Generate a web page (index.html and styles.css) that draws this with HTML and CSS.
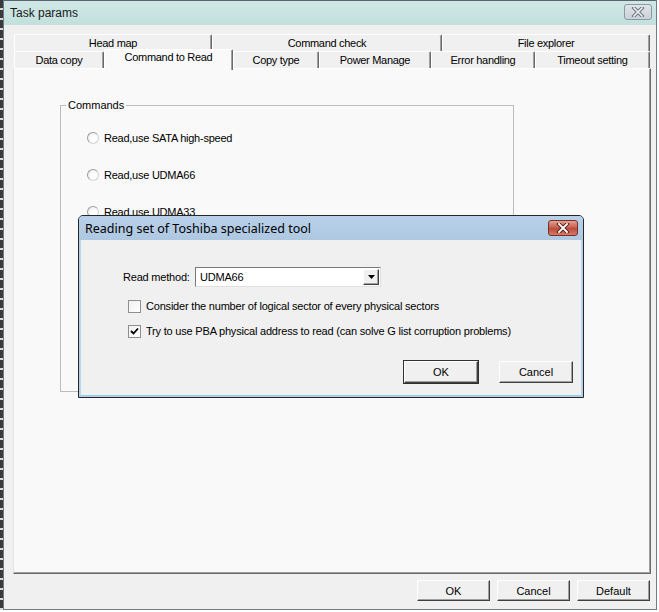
FILE: index.html
```html
<!DOCTYPE html>
<html lang="en">
<head>
    <meta charset="UTF-8">
    <title>Task params</title>
    <link rel="stylesheet" href="styles.css">
</head>
<body>
    <div class="screen">
        <div class="edge"></div>
        <div class="window">
            <div class="titlebar">
                <span class="title">Task params</span>
                <button class="close-btn">
                    <svg width="14" height="10" viewBox="0 0 14 10">
                        <path d="M3 1 L11 9 M11 1 L3 9" stroke="#6b7580" stroke-width="3.6" stroke-linecap="square"/>
                        <path d="M3 1 L11 9 M11 1 L3 9" stroke="#eef1f3" stroke-width="1.6" stroke-linecap="square"/>
                    </svg>
                </button>
            </div>

            <div class="content">
                <!-- back row of tabs -->
                <div class="tab-row">
                    <div class="tab" style="width: 198px;">Head map</div>
                    <div class="tab" style="width: 230px;">Command check</div>
                    <div class="tab" style="width: 208px;">File explorer</div>
                </div>
                <!-- front row of tabs -->
                <div class="tab-row">
                    <div class="tab" style="width: 90px;">Data copy</div>
                    <div class="tab active" style="width: 129px;">Command to Read</div>
                    <div class="tab" style="width: 86px;">Copy type</div>
                    <div class="tab" style="width: 112px;">Power Manage</div>
                    <div class="tab" style="width: 104px;">Error handling</div>
                    <div class="tab" style="width: 115px;">Timeout setting</div>
                </div>

                <div class="panel">
                    <fieldset class="group">
                        <legend>Commands</legend>
                        <label class="radio-row"><span class="radio"></span>Read,use SATA high-speed</label>
                        <label class="radio-row"><span class="radio"></span>Read,use UDMA66</label>
                        <label class="radio-row"><span class="radio"></span>Read,use UDMA33</label>
                    </fieldset>
                </div>

                <div class="footer">
                    <button class="btn">OK</button>
                    <button class="btn">Cancel</button>
                    <button class="btn">Default</button>
                </div>
            </div>
        </div>
    </div>

    <!-- modal dialog over the tab page -->
    <div class="dialog">
        <div class="dialog-title">
            <span>Reading set of Toshiba specialized tool</span>
            <button class="dialog-close">
                <svg width="14" height="10" viewBox="0 0 14 10">
                    <path d="M3 1 L11 9 M11 1 L3 9" stroke="#5a2018" stroke-width="3.8" stroke-linecap="square"/>
                    <path d="M3 1 L11 9 M11 1 L3 9" stroke="#ffffff" stroke-width="1.8" stroke-linecap="square"/>
                </svg>
            </button>
        </div>
        <div class="dialog-body">
            <div class="method-row">
                <span class="method-label">Read method:</span>
                <div class="combo">
                    <span class="combo-value">UDMA66</span>
                    <span class="combo-arrow">
                        <svg width="7" height="4" viewBox="0 0 7 4"><path d="M0 0 H7 L3.5 4 Z" fill="#000"/></svg>
                    </span>
                </div>
            </div>
            <label class="check-row"><span class="checkbox"></span>Consider the number of logical sector of every physical sectors</label>
            <label class="check-row">
                <span class="checkbox">
                    <svg width="9" height="9" viewBox="0 0 9 9"><path d="M1 4 L3.5 6.5 L8 1.5" fill="none" stroke="#000" stroke-width="1.8"/></svg>
                </span>Try to use PBA physical address to read (can solve G list corruption problems)
            </label>
            <div class="dialog-buttons">
                <button class="btn btn-default">OK</button>
                <button class="btn">Cancel</button>
            </div>
        </div>
    </div>
</body>
</html>
```

FILE: styles.css
```css
html, body {
    margin: 0;
    height: 612px;
    overflow: hidden;
    background: #ffffff;
}
body {
    font-family: "Liberation Sans", Arial, sans-serif;
    font-size: 11px;
    color: #000;
    position: relative;
}
.screen {
    display: flex;
    height: 610px;
}
.edge {
    width: 3px;
    background: repeating-linear-gradient(to bottom, #3a3a3a 0, #3a3a3a 8px, #d8d8d8 8px, #d8d8d8 10px);
}
.window {
    width: 654px;
    box-sizing: border-box;
    border: 1px solid #6f7c88;
    border-top-color: #5a6570;
    background: #f0f0f0;
    display: flex;
    flex-direction: column;
}
.titlebar {
    height: 24px;
    background: linear-gradient(to bottom, #cfe8e6, #c3e0dd);
    display: flex;
    align-items: center;
    padding: 0 4px 0 6px;
}
.title {
    font-size: 12px;
    flex-grow: 1;
    color: #1a1a1a;
}
.close-btn {
    width: 28px;
    height: 16px;
    margin-top: -2px;
    padding: 0;
    border: 1px solid #8c9aa6;
    border-radius: 3px;
    background: linear-gradient(to bottom, #dfe5e9, #c9d2d8);
    display: flex;
    align-items: center;
    justify-content: center;
}
.content {
    flex-grow: 1;
    display: flex;
    flex-direction: column;
    padding: 9px 5px 8px 9px;
}
.tab-row {
    display: flex;
    height: 17px;
    padding-left: 1px;
}
.tab {
    box-sizing: border-box;
    height: 17px;
    border-top: 1px solid #ffffff;
    border-left: 1px solid #ffffff;
    border-right: 1px solid #696969;
    box-shadow: inset -1px 0 #a0a0a0;
    border-radius: 2px 2px 0 0;
    text-align: center;
    line-height: 16px;
    white-space: nowrap;
    letter-spacing: -0.3px;
}
.tab.active {
    height: 21px;
    margin-top: -2px;
    margin-bottom: -2px;
    background: #f9f9f9;
    line-height: 15px;
    position: relative;
    z-index: 1;
}
.panel {
    flex-grow: 1;
    background: #f9f9f9;
    border-top: 1px solid #ffffff;
    border-left: 1px solid #e3e3e3;
    border-right: 1px solid #696969;
    border-bottom: 1px solid #696969;
    box-shadow: inset -1px -1px #a0a0a0;
}
.group {
    margin: 30px 0 0 46px;
    width: 454px;
    height: 293px;
    box-sizing: border-box;
    border: 1px solid #bcbcbc;
    padding: 18px 0 0 0;
    min-width: 0;
    display: flex;
    flex-direction: column;
    gap: 21px;
}
.group legend {
    margin-left: 5px;
    padding: 0 2px;
    line-height: 13px;
}
.radio-row {
    display: flex;
    align-items: center;
    gap: 5px;
    height: 16px;
    margin-left: 26px;
    letter-spacing: -0.25px;
}
.radio {
    width: 10px;
    height: 10px;
    border-radius: 50%;
    border: 1px solid #9d9d9d;
    border-bottom-color: #d4d4d4;
    border-right-color: #d4d4d4;
    background: radial-gradient(circle at 60% 60%, #ffffff 30%, #e6e6e6 100%);
}
.footer {
    display: flex;
    justify-content: flex-end;
    gap: 7px;
    padding-top: 6px;
    padding-right: 1px;
}
.btn {
    width: 73px;
    height: 21px;
    box-sizing: border-box;
    font-family: "Liberation Sans", Arial, sans-serif;
    font-size: 11px;
    color: #000;
    background: #f0f0f0;
    border: 1px solid;
    border-color: #ffffff #404040 #404040 #ffffff;
    box-shadow: inset -1px -1px #a0a0a0;
    padding: 0;
}
.btn-default {
    outline: 1px solid #303030;
    outline-offset: 0;
}
.dialog {
    position: absolute;
    left: 78px;
    top: 215px;
    width: 506px;
    height: 183px;
    box-sizing: border-box;
    border: 1px solid #262626;
    border-radius: 5px 5px 0 0;
    background: #b5cde6;
    display: flex;
    flex-direction: column;
    z-index: 5;
}
.dialog-title {
    height: 24px;
    display: flex;
    align-items: center;
    padding: 0 5px 0 6px;
    font-family: "Noto Sans", "Liberation Sans", sans-serif;
    font-size: 12.5px;
    border-radius: 4px 4px 0 0;
    background: linear-gradient(to bottom, #b8d0e8, #afc8e2);
}
.dialog-title span {
    flex-grow: 1;
}
.dialog-close {
    width: 30px;
    height: 16px;
    margin-top: -1px;
    padding: 0;
    border: 1px solid #7a3028;
    border-radius: 3px;
    background: linear-gradient(to bottom, #e2a193, #c75a48 50%, #b84a38 51%, #d47a68);
    display: flex;
    align-items: center;
    justify-content: center;
}
.dialog-body {
    flex-grow: 1;
    margin: 0 1px 1px 1px;
    background: #f0f0f0;
    border-bottom: 1px solid #8fd0ee;
    border-left: 1px solid #b5d8ee;
    border-right: 1px solid #b5d8ee;
    padding: 27px 8px 0 42px;
    letter-spacing: -0.2px;
}
.method-row {
    display: flex;
    align-items: center;
    height: 20px;
}
.method-label {
    width: 72px;
}
.combo {
    width: 186px;
    height: 20px;
    box-sizing: border-box;
    background: #ffffff;
    border: 1px solid;
    border-color: #7a7a7a #e0e0e0 #e0e0e0 #7a7a7a;
    display: flex;
    align-items: center;
    padding: 1px;
}
.combo-value {
    flex-grow: 1;
    padding-left: 3px;
}
.combo-arrow {
    width: 16px;
    height: 16px;
    box-sizing: border-box;
    background: #f0f0f0;
    border: 1px solid;
    border-color: #ffffff #404040 #404040 #ffffff;
    box-shadow: inset -1px -1px #a0a0a0;
    display: flex;
    align-items: center;
    justify-content: center;
}
.check-row {
    display: flex;
    align-items: center;
    gap: 5px;
    height: 16px;
    margin-top: 9px;
    padding-left: 5px;
}
.method-row + .check-row {
    margin-top: 11px;
}
.checkbox {
    width: 13px;
    height: 13px;
    box-sizing: border-box;
    border: 1px solid #8e8f8f;
    background: linear-gradient(135deg, #f0f0f0, #ffffff);
    display: flex;
    align-items: center;
    justify-content: center;
}
.dialog-buttons {
    display: flex;
    justify-content: flex-end;
    gap: 21px;
    margin-top: 22px;
}
.dialog-buttons .btn {
    width: 74px;
    height: 22px;
    letter-spacing: 0;
}
```
